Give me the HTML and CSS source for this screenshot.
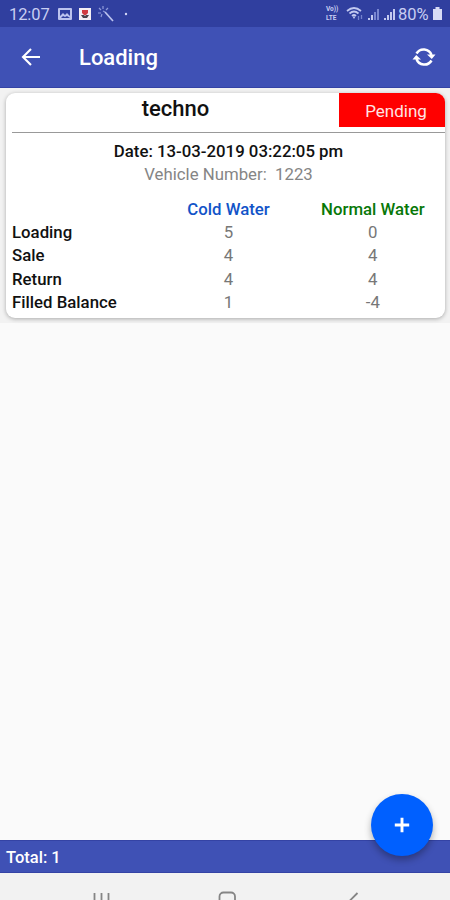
FILE: index.html
```html
<!DOCTYPE html>
<html lang="en">

<head>
    <meta charset="UTF-8">
    <meta name="viewport" content="width=device-width, initial-scale=1.0">
    <title>Loading</title>
    <link rel="stylesheet" href="styles.css">
</head>

<body>
    <!-- Status bar -->
    <div class="status-bar">
        <span class="clock">12:07</span>
        <svg class="status-icon" width="75" height="18" viewBox="0 0 75 18">
            <path fill="#bcc3ee" fill-rule="evenodd" d="M2 3h12a1 1 0 0 1 1 1v10a1 1 0 0 1-1 1H2a1 1 0 0 1-1-1V4a1 1 0 0 1 1-1zm1 2v6l3-3 2 2 2-2 3 3V5zm1 8h9l-3-2-2 1-2-1z" />
            <rect x="22" y="3" width="12" height="12" fill="#f4eff4" />
            <path d="M25 5h6v3l-2 2h-2l-2-2z" fill="#d03a40" />
            <path d="M24 10h3l1 1 1-1h3l-2 3h-4z" fill="#49434d" />
            <path d="M48 7l8 9" stroke="#bcc3ee" stroke-width="1.7" />
            <path d="M46 1v3M42 3l2 2M41 8h3M44 12l1-3M51 3l-2 2M46 6l2 1" stroke="#8f9bdb" stroke-width="1.2" />
            <circle cx="69" cy="9" r="1.2" fill="#d3d8f6" />
        </svg>
        <div class="status-right">
            <span class="volte"><span>Vo))</span><span>LTE</span></span>
            <svg width="18" height="16" viewBox="0 0 18 16" fill="none" stroke="#c2c9f0">
                <path d="M1 5q7-6 14 0M3.500 7.500q4.500-4 9 0M6 10q2-2 4 0" stroke-width="1.700" />
                <path d="M6.500 10.500h3L8 13z" fill="#c2c9f0" stroke="none" />
                <path d="M12.500 10v4M15.500 9v4" stroke="#7582cd" stroke-width="1.300" />
            </svg>
            <svg class="signal" width="31" height="14" viewBox="0 0 31 14" fill="#c2c9f0">
                <path d="M1 11h2v2H1zM4 8h2v5H4z" />
                <path d="M7 5h2v8H7zM10 2h2v11h-2z" fill="#7986d0" />
                <path d="M17 11h2v2h-2zM20 8h2v5h-2zM23 5h2v8h-2zM26 2h2v11h-2z" />
            </svg>
            <span class="percent">80%</span>
            <svg width="9" height="13" viewBox="0 0 9 13">
                <path d="M2.500 0h4v2H9v11H0V2h2.500z" fill="#d7dbf5" />
            </svg>
        </div>
    </div>

    <!-- Toolbar -->
    <div class="toolbar">
        <svg width="20" height="20" viewBox="0 0 20 20" fill="none" stroke="#fff" stroke-width="2.100">
            <path d="M19 10H2.500M10 2L2 10l8 8" />
        </svg>
        <h1>Loading</h1>
        <svg class="refresh" width="24" height="22" viewBox="0 0 24 22">
            <path d="M4.500 7.500A8.300 8.300 0 0 1 19.500 9M19.500 14.500A8.300 8.300 0 0 1 4.500 13" fill="none" stroke="#fff" stroke-width="2.500" />
            <path d="M15 8.500h8.500L19.800 13zM.500 13.500H9L4.200 9z" fill="#fff" />
        </svg>
    </div>

    <div class="content">
        <div class="card-area">
            <div class="card">
                <div class="card-header">
                    <h2>techno</h2>
                    <span class="badge">Pending</span>
                </div>
                <div class="date">Date: 13-03-2019 03:22:05 pm</div>
                <div class="vehicle">Vehicle Number:&nbsp; 1223</div>
                <div class="table">
                    <span></span>
                    <span class="cold">Cold Water</span>
                    <span class="normal">Normal Water</span>
                    <span class="name">Loading</span><span>5</span><span>0</span>
                    <span class="name">Sale</span><span>4</span><span>4</span>
                    <span class="name">Return</span><span>4</span><span>4</span>
                    <span class="name">Filled Balance</span><span>1</span><span>-4</span>
                </div>
            </div>
        </div>
    </div>

    <div class="total">Total: 1</div>

    <!-- System navigation -->
    <div class="nav-bar">
        <svg width="450" height="27" viewBox="0 0 450 27" fill="none" stroke="#858585" stroke-width="1.800">
            <path d="M94.500 20v14M101.500 20v14M108.500 20v14" />
            <rect x="219.500" y="19.500" width="15.500" height="15" rx="4" />
            <path d="M357.500 20l-8 8 8 8" />
        </svg>
    </div>

    <button class="add-button" aria-label="Add">
        <svg width="16" height="16" viewBox="0 0 16 16" stroke="#fff" stroke-width="2.900">
            <path d="M8 .800v14.400M.800 8h14.400" />
        </svg>
    </button>
</body>

</html>
```

FILE: styles.css
```css
* {
    box-sizing: border-box;
}

body {
    font-family: Roboto, sans-serif;
    margin: 0;
    height: 900px;
    display: flex;
    flex-direction: column;
    position: relative;
    overflow: hidden;
    background-color: #fafafa;
    color: #111;
}

h1,
h2 {
    margin: 0;
    font-weight: 500;
}

.status-bar {
    height: 27px;
    padding: 0 8px 0 9px;
    display: flex;
    align-items: center;
    background-color: #303f9f;
    color: #c8cef2;
}

.clock {
    width: 48px;
    font-size: 16.5px;
    letter-spacing: -0.1px;
    padding-top: 2px;
}

.status-right {
    margin-left: auto;
    display: flex;
    align-items: center;
}

.volte {
    width: 20px;
    display: flex;
    flex-direction: column;
    gap: 1px;
    font-size: 6.5px;
    line-height: 8px;
    font-weight: 700;
}

.signal {
    margin-left: 3px;
}

.percent {
    width: 35px;
    font-size: 16.5px;
    letter-spacing: 0;
    padding-top: 2px;
}

.toolbar {
    height: 61px;
    padding: 0 14px 0 21px;
    display: flex;
    align-items: center;
    background-color: #3f51b5;
    border-bottom: 1px solid #3443a5;
    color: #fff;
}

.toolbar h1 {
    margin-left: 38px;
    padding-top: 2px;
    font-size: 22px;
    line-height: 26px;
}

.refresh {
    margin-left: auto;
}

.content {
    flex: 1;
}

.card-area {
    height: 235px;
    padding: 5px 5px 0 6px;
    background-color: #f2f2f2;
}

.card {
    height: 225px;
    overflow: hidden;
    border-radius: 9px;
    background-color: #fff;
    box-shadow: 0 1px 4px rgba(0, 0, 0, 0.3);
    font-size: 16.8px;
    text-align: center;
}

.card-header {
    height: 40px;
    margin-left: 6px;
    display: flex;
    align-items: flex-start;
    border-bottom: 1px solid #999;
}

.card-header h2 {
    flex: 1;
    font-size: 22px;
    line-height: 32px;
}

.badge {
    width: 106px;
    height: 34px;
    padding-left: 8px;
    background-color: #f00;
    color: #ffe4e4;
    font-size: 17px;
    line-height: 36px;
}

.date {
    margin-top: 7px;
    padding-left: 6px;
    font-weight: 500;
    line-height: 23px;
}

.vehicle {
    padding-left: 6px;
    color: #858585;
    line-height: 23px;
}

.table {
    margin-top: 11px;
    padding-left: 6px;
    display: grid;
    grid-template-columns: 1fr 1fr 1fr;
    grid-auto-rows: 23.2px;
    line-height: 25px;
    color: #777;
}

.name {
    color: #111;
    font-weight: 500;
    text-align: left;
}

.cold {
    color: #1254c8;
    font-weight: 500;
}

.normal {
    color: #087808;
    font-weight: 500;
}

.total {
    height: 33px;
    padding-left: 6px;
    background-color: #3f51b5;
    border-top: 1px solid #3443a5;
    border-bottom: 1px solid #3443a5;
    color: #fff;
    font-size: 16.5px;
    font-weight: 500;
    line-height: 34px;
}

.nav-bar {
    height: 27px;
    background-color: #f2f2f2;
}

.nav-bar svg {
    display: block;
}

/* Floats over the list and the total bar */
.add-button {
    position: absolute;
    right: 17px;
    bottom: 44px;
    width: 62px;
    height: 62px;
    padding: 0;
    display: flex;
    align-items: center;
    justify-content: center;
    border: none;
    border-radius: 50%;
    background-color: #0060ff;
    box-shadow: 0 4px 7px rgba(0, 0, 0, 0.3);
}
```
